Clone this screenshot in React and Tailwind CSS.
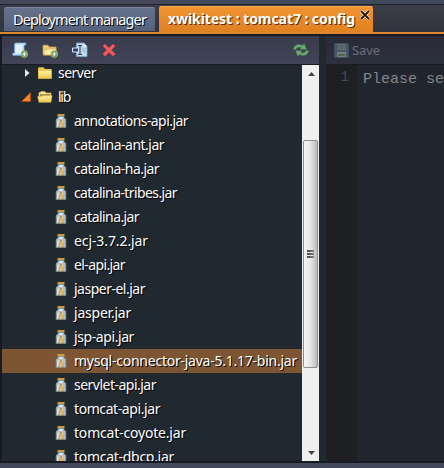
import { useLayoutEffect, useRef, useState } from "react";

const FILES = [
  ["annotations-api.jar", 114],
  ["catalina-ant.jar", 90],
  ["catalina-ha.jar", 85],
  ["catalina-tribes.jar", 103],
  ["catalina.jar", 65],
  ["ecj-3.7.2.jar", 74],
  ["el-api.jar", 51],
  ["jasper-el.jar", 71],
  ["jasper.jar", 57],
  ["jsp-api.jar", 60],
  ["mysql-connector-java-5.1.17-bin.jar", 223],
  ["servlet-api.jar", 82],
  ["tomcat-api.jar", 86],
  ["tomcat-coyote.jar", 112],
  ["tomcat-dbcp.jar", 100],
];

// Label whose tracking is adjusted so that it takes the given width.
function Label({ text, width, className = "" }) {
  const ref = useRef(null);
  const [spacing, setSpacing] = useState(0);
  useLayoutEffect(() => {
    const natural = ref.current.getBoundingClientRect().width;
    setSpacing((width - natural) / text.length);
  }, [text, width]);
  return (
    <span ref={ref} className={"whitespace-pre " + className} style={{ letterSpacing: spacing + "px" }}>
      {text}
    </span>
  );
}

function Jar() {
  return (
    <svg width="12" height="16" viewBox="0 0 12 16" className="shrink-0">
      <rect x="2.5" y="1" width="7" height="2" fill="#d99b35" />
      <path d="M3 3.3h6v1.9l1.8 1v8.3H1.2V6.2l1.8-1z" fill="#b4c1c6" stroke="#7f929b" strokeWidth=".8" />
      <path d="M2 7h1.6v7H2z" fill="#d5dddf" />
      <path d="M4.5 4h3v2h-3z" fill="#e2e8e7" />
      <path d="M4 8h4v6H4z" fill="#e6d3a4" />
      <path d="M5 7.5h2v2H5zM4 10.3h1.5v1.4H4zM6.7 10.3h1.5v1.4H6.7zM3.3 12.7h1.9V14H3.3zM6.5 12.7h2V14h-2z" fill="#c88a2b" />
    </svg>
  );
}

function Folder({ open }) {
  return (
    <svg width="16" height="16" viewBox="0 0 16 16" className="shrink-0">
      <defs>
        <linearGradient id="folder" x1="0" y1="0" x2="0" y2="1">
          <stop offset="0" stopColor="#fff3a2" />
          <stop offset="1" stopColor="#eec54d" />
        </linearGradient>
      </defs>
      {open ? (
        <>
          <path d="M2 7V3.5h1L4 2.5h4l1 1.5h5V8H2z" fill="#f7e28b" stroke="#d5ac3b" strokeWidth=".7" />
          <path d="M3 6h10" stroke="#4b4524" />
          <path d="M.7 7.5h4L6 6.7h9L14 13.3H2z" fill="url(#folder)" stroke="#dbb443" strokeWidth=".6" />
        </>
      ) : (
        <>
          <path d="M1 13.5V3.2l1-1h4.5L8 4h6.5v9.5z" fill="#eac54d" />
          <path d="M1.5 5.5h13v8h-13z" fill="url(#folder)" stroke="#dfb947" strokeWidth=".5" />
        </>
      )}
    </svg>
  );
}

function AddBadge() {
  return (
    <g>
      <circle cx="12.3" cy="12" r="3.4" fill="#5f9d46" stroke="#bdd79d" strokeWidth=".6" />
      <path d="M12.3 10v4M10.3 12h4" stroke="#fff" strokeWidth="1.2" />
    </g>
  );
}

function Toolbar() {
  return (
    <div className="flex h-[29px] items-center bg-linear-to-b from-[#383b4c] to-[#424458] pl-[10px] pr-[10px] border-b border-[#171b22]">
      <svg width="16" height="16" viewBox="0 0 16 16">
        <path d="M3.5 1h9.8c1 0 1 2 0 2H12v10.5H1.5c-1.2 0-1-2.5 0-2.5h1V2.2z" fill="#cce5f8" stroke="#73a9d7" strokeWidth=".8" />
        <path d="M4 3h6v8H4z" fill="#e4f2fc" />
        <path d="M1.5 13.4h8" stroke="#5f98d1" />
        <AddBadge />
      </svg>
      <svg width="16" height="16" viewBox="0 0 16 16" className="ml-[14px]">
        <path d="M1 13V3.2h5L7.3 5H14v8z" fill="#f4d779" stroke="#c79d4e" strokeWidth=".7" />
        <path d="M2 6h11M2 7.8h3l1.2-1H14V13H2z" fill="#ffeca6" stroke="#d7aa58" strokeWidth=".7" />
        <AddBadge />
      </svg>
      <svg width="16" height="16" viewBox="0 0 16 16" className="ml-[14px]">
        <path d="M4.5 1h7L15 4.2v10.3H4.5z" fill="#bed9ef" stroke="#7dabd2" strokeWidth=".8" />
        <path d="M11.5 1v3.5H15z" fill="#f0f8fe" />
        <path d="M.5 6h6v4h-6z" fill="#263e80" stroke="#d9e5ff" />
        <path d="M6 3.5h4M8 3.5v9M6 12.5h4" stroke="#39404a" strokeWidth="1.1" />
        <path d="M10.5 7h3M10.5 9h3" stroke="#8db2d3" />
      </svg>
      <svg width="16" height="16" viewBox="0 0 16 16" className="ml-[13px]">
        <path d="M3.7 2L8 6l4.2-4 2 2L10.3 8l4 4-2.2 2.2L8 10.3 4 14.3 1.8 12l4-4-4-3.8z" fill="#f45b5a" stroke="#d74147" strokeWidth=".5" />
      </svg>
      <svg width="16" height="16" viewBox="0 0 16 16" className="ml-auto">
        <path d="M.3 7.6C.8 3.2 5.6 1.3 9.7 3.5L11.2 1.5l2.3 6-6.6-.3 1.4-1.7C5.8 4.7 3.8 5.5 3 7.6z" fill="#65aa68" />
        <path d="M15.7 8.4c-.5 4.4-5.3 6.3-9.4 4.1l-1.5 2-2.3-6 6.6.3-1.4 1.7c2.5.8 4.5 0 5.3-2.1z" fill="#65aa68" />
      </svg>
    </div>
  );
}

function Scrollbar() {
  return (
    <div className="flex w-[17px] shrink-0 flex-col items-center bg-[#efefef]">
      <svg width="7" height="4" viewBox="0 0 7 4" className="mt-[7px] ml-px shrink-0">
        <path d="M3.5 0L7 4H0z" fill="#444" />
      </svg>
      <div className="mt-[64px] flex h-[228px] w-[15px] shrink-0 flex-col items-center justify-center gap-px rounded-[2px] border border-[#8e8e8e] bg-linear-to-r from-[#f7f7f7] via-[#e6e6e6] to-[#b9babd]">
        <i className="h-[2px] w-[7px] bg-linear-to-r from-[#444] to-[#888]" />
        <i className="h-[2px] w-[7px] bg-linear-to-r from-[#444] to-[#888]" />
        <i className="h-[2px] w-[7px] bg-linear-to-r from-[#444] to-[#888]" />
      </div>
      <svg width="7" height="4" viewBox="0 0 7 4" className="mt-auto mb-[6px] ml-px shrink-0">
        <path d="M0 0h7L3.5 4z" fill="#444" />
      </svg>
    </div>
  );
}

function Tree() {
  return (
    <div className="flex h-[396px] overflow-hidden">
      <div className="-mt-[4px] flex-1 font-['Noto_Sans',sans-serif] text-[14px] leading-[22px] text-white [text-shadow:1px_1px_0_#000]">
        <div className="flex h-6 items-center pl-[22px]">
          <svg width="5" height="8" viewBox="0 0 5 8" className="ml-px">
            <path d="M0 0l4.5 4L0 8z" fill="#f1f1f1" />
          </svg>
          <span className="ml-[7px] flex"><Folder /></span>
          <Label text="server" width={38} className="ml-[5px]" />
        </div>
        <div className="flex h-6 items-center pl-[19px]">
          <svg width="10" height="10" viewBox="0 0 10 10">
            <path d="M9.5 .5v9H.5z" fill="#ff831d" stroke="#a94d0d" strokeWidth=".6" />
          </svg>
          <span className="ml-[6px] flex"><Folder open /></span>
          <Label text="lib" width={12} className="ml-[5px]" />
        </div>
        {FILES.map(([name, width]) => (
          <div
            key={name}
            className={"flex h-6 items-center pl-[53px] " + (name.startsWith("mysql") ? "bg-[#7e5532]" : "")}
          >
            <Jar />
            <Label text={name} width={width} className="ml-[7px]" />
          </div>
        ))}
      </div>
      <Scrollbar />
    </div>
  );
}

export default function App() {
  return (
    <div className="flex h-[468px] w-[444px] flex-col overflow-hidden bg-[#414859] font-['Noto_Sans',sans-serif]">
      <div className="mt-1 flex h-[28px] shrink-0 items-end border-t border-[#20242c] bg-linear-to-b from-[#3b3e49] to-[#30323d] pl-[4px]">
        <div className="mb-px flex h-[24px] w-[151px] items-start rounded-t-[2px] border-t border-[#7a849e] bg-linear-to-b from-[#66718c] to-[#56617c] pl-[9px] text-[14.5px] leading-[22px] text-white [text-shadow:1px_1px_0_#000]">
          <Label text="Deployment manager" width={133} />
        </div>
        <div className="ml-[4px] flex h-[26px] w-[214px] items-start rounded-t-[2px] border-t border-[#f7a94e] bg-linear-to-b from-[#f19431] to-[#df8021] pl-[9px] text-[14px] leading-[24px] font-bold text-white [text-shadow:1px_1px_0_#5c2c00]">
          <Label text="xwikitest : tomcat7 : config" width={187} />
          <svg width="10" height="10" viewBox="0 0 10 10" className="mt-[3px] ml-[5px] shrink-0">
            <path d="M1 1l8 8M9 1L1 9" stroke="#fff" strokeWidth="3.2" />
            <path d="M1 1l8 8M9 1L1 9" stroke="#281507" strokeWidth="1.9" />
          </svg>
        </div>
      </div>
      <div className="h-[2px] shrink-0 bg-[#df852d]" />
      <div className="flex h-[429px] shrink-0 border-t-2 border-b-2 border-l-2 border-[#171a20] bg-[#202830]">
        <div className="w-[317px] shrink-0">
          <Toolbar />
          <Tree />
        </div>
        <div className="ml-[7px] flex flex-1 flex-col">
          <div className="flex h-[29px] shrink-0 items-center border-b border-[#1a1c22] bg-linear-to-b from-[#282b36] to-[#2d303d] pl-[8px] text-[13px] text-[#6b6e77]">
            <svg width="15" height="15" viewBox="0 0 15 15">
              <path d="M.5.5h13l1 1v13H.5z" fill="#46566a" stroke="#3f4f63" />
              <path d="M3 1h9v6H3z" fill="#666b71" />
              <path d="M3 3h9M3 5h9" stroke="#565d64" />
              <path d="M3 9h9v5H3z" fill="#777e78" />
              <path d="M4 11h7v2H4z" fill="#4f6955" />
            </svg>
            <Label text="Save" width={28} className="mt-px ml-[3px]" />
          </div>
          <div className="flex flex-1 bg-[#21252d] font-['Liberation_Mono',monospace] leading-[18px]">
            <div className="w-[31px] shrink-0 bg-[#1e1f23] pt-[3px] pr-[8px] text-right text-[14px] text-[#484a4f]">1</div>
            <div className="pt-[6px] pl-[6px] text-[15px] whitespace-pre text-[#85868a]">Please se</div>
          </div>
        </div>
      </div>
    </div>
  );
}
